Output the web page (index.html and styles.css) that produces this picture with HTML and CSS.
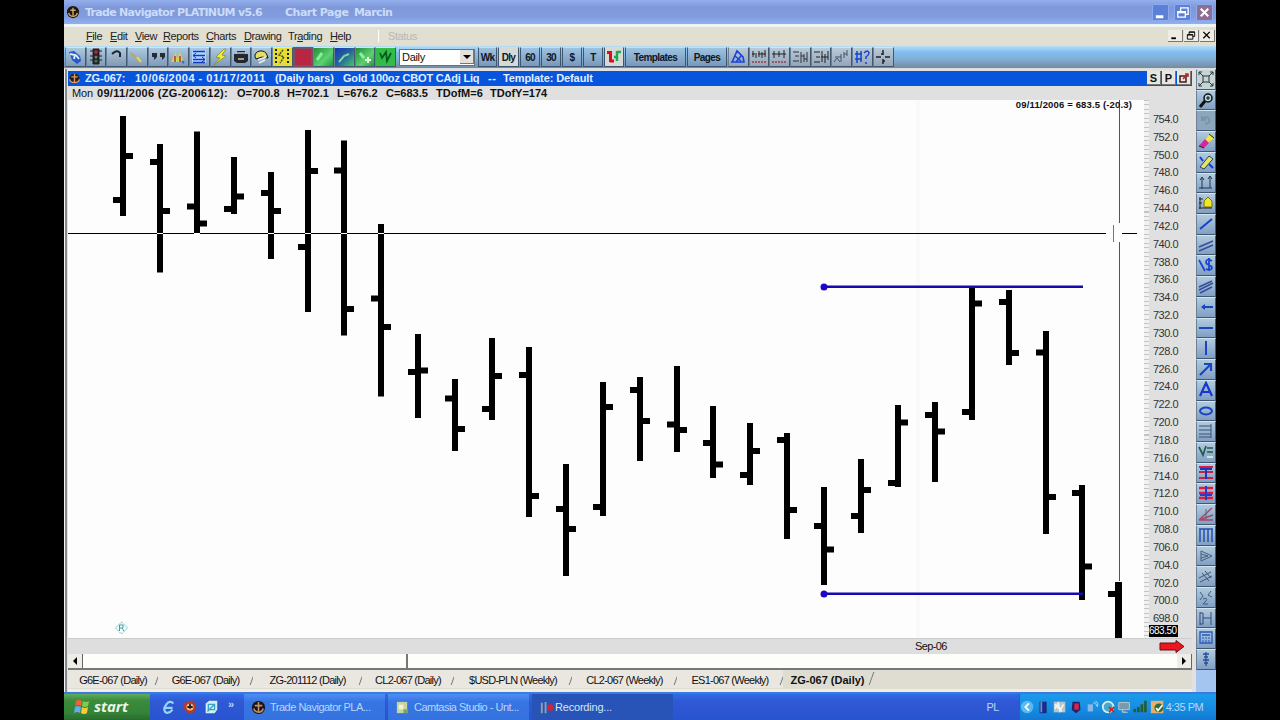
FILE: index.html
```html
<!DOCTYPE html>
<html lang="en">
<head>
    <meta charset="UTF-8">
    <title>Trade Navigator PLATINUM</title>
    <link rel="stylesheet" href="styles.css">
</head>
<body>
    <div class="screen">
        <header class="titlebar">
            <svg class="anchor" viewBox="0 0 16 16"><circle cx="8" cy="8" r="7" fill="#1b1713"/><path d="M8 3v9M5 6h6M3 9q1 4 5 4t5-4" stroke="#d5a66c" stroke-width="1.6" fill="none"/></svg>
            <span class="app-name">Trade Navigator PLATINUM v5.6</span>
            <span class="app-page">Chart Page</span>
            <span class="app-user">Marcin</span>
            <div class="window-buttons">
                <svg viewBox="0 0 16 16"><path d="M3 11h8v3H3z" fill="#fff"/></svg>
                <svg viewBox="0 0 16 16"><path d="M6 7V3h8v7h-3M3 7h8v6H3zM3 8h8" stroke="#fff" stroke-width="1.4" fill="none"/></svg>
                <svg class="close" viewBox="0 0 16 16"><path d="M4 4l8 8M12 4l-8 8" stroke="#fff" stroke-width="2.2"/></svg>
            </div>
        </header>

        <nav class="menubar">
            <span style="width:24px"><u>F</u>ile</span>
            <span style="width:25px"><u>E</u>dit</span>
            <span style="width:28px"><u>V</u>iew</span>
            <span style="width:43px"><u>R</u>eports</span>
            <span style="width:38px"><u>C</u>harts</span>
            <span style="width:44px"><u>D</u>rawing</span>
            <span style="width:42px">Tr<u>a</u>ding</span>
            <span style="width:48px"><u>H</u>elp</span>
            <span class="ghost">Status</span>
            <div class="mdi-buttons">
                <svg viewBox="0 0 12 12"><path d="M2 9h5" stroke="#000" stroke-width="2"/></svg>
                <svg viewBox="0 0 12 12"><path d="M4 5V2h6v5H8M2 5h6v5H2zM2 5.500h6M4 2.500h6" stroke="#000" fill="none"/></svg>
                <svg viewBox="0 0 12 12"><path d="M2 2l7 7M9 2l-7 7" stroke="#000" stroke-width="1.400"/></svg>
            </div>
        </nav>

        <div class="toolbar">
            <div class="tools">
                <i><svg viewBox="0 0 18 18"><path d="M3 4l5-1 6 5 1 5-4 3-5-4z" fill="#2956c9"/><path d="M4 6l5 1-1 4M10 7l3 4" stroke="#d5ecff" stroke-width="2" fill="none"/></svg></i>
                <i><svg viewBox="0 0 18 18"><path d="M6 1h6v15H6zM3 3h12M3 8h12M3 12h12" stroke="#222" fill="#222"/><circle cx="9" cy="4" r="2" fill="#b02030"/><circle cx="9" cy="9" r="1.500" fill="#777"/><circle cx="9" cy="13" r="1.500" fill="#427860"/></svg></i>
                <i><svg viewBox="0 0 18 18"><path d="M5 6q5-5 8-1v4" stroke="#222" stroke-width="2" fill="none"/><path d="M2 13h11" stroke="#99a6a8" stroke-width="2"/></svg></i>
                <i><svg viewBox="0 0 18 18"><path d="M3 4l10 8-2 3-9-9z" fill="#b0ab72"/><path d="M9 9l4 5" stroke="#e8d95a" stroke-width="2"/></svg></i>
                <i><svg viewBox="0 0 18 18"><path d="M3 5h5v4l-3 3V9H3zM11 5h5v4l-3 3V9h-2z" fill="#252c35"/></svg></i>
                <i><svg viewBox="0 0 18 18"><path d="M2 14l5-11 1 8 3-7 4 10z" fill="#d6cf5a"/><path d="M6 14V8M11 14V8" stroke="#b95e35" stroke-width="2"/><path d="M13 13l2 2" stroke="#376bb5" stroke-width="2"/></svg></i>
                <i><svg viewBox="0 0 18 18"><path d="M2 2h14v13H2z" fill="#abd4ff"/><path d="M3 3.500h12M3 7.500h12M3 11.500h12M3 14.500h12" stroke="#1438bf" stroke-width="1.500"/><path d="M6 5L3 7.500 6 10M12 9l3 2.500-3 2.500" stroke="#1438bf" fill="none"/></svg></i>
                <i><svg viewBox="0 0 18 18"><path d="M13 1L5 9l4 1-6 7 12-9-4-1 4-6z" fill="#f3ed2b" stroke="#7b7e34" stroke-width=".7"/></svg></i>
                <i><svg viewBox="0 0 18 18"><path d="M5 3h8v3h3v7l-3 2H5l-3-2V6h3z" fill="#24272b"/><path d="M5 5h8M6 11h6" stroke="#bdc7cc" stroke-width="1.500"/></svg></i>
                <i><svg viewBox="0 0 18 18"><path d="M3 9a6 5 0 0 1 12-2l1 3-6-1-6 2z" fill="#e4df66" stroke="#111"/><path d="M6 12l8-3M7 15l6-3" stroke="#eee" stroke-width="1.500"/></svg></i>
                <i class="film"><svg viewBox="0 0 18 18"><path d="M3 1v16M15 1v16" stroke="#222" stroke-width="2" stroke-dasharray="2 2"/><path d="M10 2l-4 5 5 2-4 6" stroke="#4c4c1c" stroke-width="1.500" stroke-dasharray="2 1" fill="none"/></svg></i>
                <i class="red"></i>
                <i class="green"><svg viewBox="0 0 18 18"><path d="M3 12l5-7" stroke="#8df09b" stroke-width="3"/></svg></i>
                <i class="bluegreen"><svg viewBox="0 0 18 18"><path d="M4 14l5-6 5-2" stroke="#6fe09b" stroke-width="2" fill="none"/></svg></i>
                <i class="green"><svg viewBox="0 0 18 18"><path d="M4 5l4 5" stroke="#8df09b" stroke-width="3"/><path d="M12 9v6M9 12h6" stroke="#e8fbdc" stroke-width="2"/></svg></i>
                <i class="green deep"><svg viewBox="0 0 18 18"><path d="M4 5l2 5 4-6 1 9 4-8" stroke="#07571c" stroke-width="1.700" fill="none"/></svg></i>
            </div>
            <div class="combo"><span>Daily</span><b></b></div>
            <div class="periods">
                <button style="width:19px">Wk</button>
                <button class="on" style="width:21px">Dly</button>
                <button style="width:20px">60</button>
                <button style="width:20px">30</button>
                <button style="width:20px">$</button>
                <button style="width:20px">T</button>
                <button class="candles" style="width:20px"><svg viewBox="0 0 18 18"><path d="M2 4.500h4M5.500 3v11M5 13h4" stroke="#d90f1c" stroke-width="3" fill="none"/><path d="M9 9h3M12 3v10M12 4h4" stroke="#1dab48" stroke-width="2.400" fill="none"/></svg></button>
                <button style="width:61px">Templates</button>
                <button style="width:40px">Pages</button>
            </div>
            <div class="tools studies">
                <i><svg viewBox="0 0 18 18"><path d="M4 12l4-9 6 6 1 5H3zM6 8l6 5M7 14l5-6" stroke="#1745dc" stroke-width="1.600" fill="none"/></svg></i>
                <i><svg viewBox="0 0 18 18"><path d="M3 3v6M6 5v5M9 3v6M12 4v6M15 2v7M2 6h3M8 6h8" stroke="#222"/><path d="M2 14h14" stroke="#9b5964" stroke-width="2" stroke-dasharray="2 1"/></svg></i>
                <i><svg viewBox="0 0 18 18"><path d="M4 3v7M9 3v6M14 2v8M2 6h14" stroke="#222"/><path d="M2 14h14" stroke="#9b5964" stroke-width="2" stroke-dasharray="2 1"/></svg></i>
                <i><svg viewBox="0 0 18 18"><path d="M2 4h6M4 8h4M2 13h6M10 4v11M13 6v8M16 4v10M10 8h3M13 11h3" stroke="#333"/></svg></i>
                <i><svg viewBox="0 0 18 18"><path d="M2 4h6M4 9h4M2 14h6M10 3v11M13 6v9M16 3v9M9 9h7" stroke="#222"/></svg></i>
                <i><svg viewBox="0 0 18 18"><path d="M2 14l3-4 3 4M9 6v8M12 4v6M15 2v6M3 9h6M12 6h3" stroke="#4b536b" fill="none"/></svg></i>
                <i><svg viewBox="0 0 18 18"><path d="M4 3v12M8 3v11M2 6h7M2 11h7M11 5q4-4 5 0 0 2-3 4v2M13 14v2" stroke="#1744d2" stroke-width="1.500" fill="none"/></svg></i>
                <i><svg viewBox="0 0 18 18"><path d="M9 2v5M9 11v5M2 9h5M11 9h5M7 6h2M9 13h2" stroke="#222" stroke-width="1.500"/></svg></i>
            </div>
        </div>

        <main class="workspace">
            <section class="document">
                <div class="doc-title">
                    <svg class="anchor" viewBox="0 0 16 16"><circle cx="8" cy="8" r="6" fill="#241c20"/><path d="M8 2v11M4 6h8M2 9q1 4 6 4t6-4" stroke="#d99c5c" stroke-width="1.700" fill="none"/></svg>
                    <span class="tight" style="width:50px">ZG-067:</span>
                    <span style="width:140px">10/06/2004 - 01/17/2011</span>
                    <span class="tight" style="width:68px">(Daily bars)</span>
                    <span class="tighter" style="width:145px">Gold 100oz CBOT CAdj Liq</span>
                    <span style="width:15px">--</span>
                    <span class="tight">Template: Default</span>
                    <div class="doc-buttons">
                        <b>S</b><b>P</b>
                        <b><svg viewBox="0 0 12 12"><path d="M2 4h6v6H2z" stroke="#421a20" stroke-width="1.500" fill="none"/><path d="M5 7l5-5M7 2h3v3" stroke="#b32735" stroke-width="1.500" fill="none"/></svg></b>
                    </div>
                </div>
                <div class="bar-info">
                    <span class="day" style="width:25px">Mon</span>
                    <span class="date" style="width:140px">09/11/2006 (ZG-200612):</span>
                    <span style="width:50px">O=700.8</span>
                    <span style="width:50px">H=702.1</span>
                    <span style="width:49px">L=676.2</span>
                    <span style="width:50px">C=683.5</span>
                    <span style="width:54px">TDofM=6</span>
                    <span>TDofY=174</span>
                </div>
                <div class="chart-row">
                    <div class="plot">
                        <svg width="1076" height="538" viewBox="68 100 1076 538">
                            <path d="M918 100V638" stroke="#f9f9f9" stroke-width="4"/>
                            <path id="bars" stroke="#000" stroke-width="6" fill="none"/>
                            <path d="M1118.500 582V638" stroke="#000" stroke-width="7"/>
                            <path d="M824 286.700H1083M824 593.700H1083" stroke="#1609ad" stroke-width="2.600"/>
                            <circle cx="824" cy="287" r="3.500" fill="#1b07c7"/>
                            <circle cx="824" cy="594" r="3.500" fill="#1b07c7"/>
                            <path d="M68 233.500H1106M1122 233.500H1137" stroke="#000"/>
                            <path id="crossings" stroke="#fff"/>
                            <path d="M1119.500 100V223M1119.500 242V581" stroke="#555"/>
                            <path d="M1113.500 225V242" stroke="#777"/>
                            <path d="M121.500 622l6 6-6 6-6-6z" fill="#f2ffff" stroke="#5db9b9" stroke-dasharray="2 1"/>
                            <path d="M119.500 631v-6h3.500v3h-3M122 628l2 3" stroke="#4b9e9e" fill="none"/>
                        </svg>
                        <div class="readout">09/11/2006 = 683.5 (-20.3)</div>
                    </div>
                    <div class="price-axis" id="axis"></div>
                </div>
                <div class="time-axis">
                    <span>Sep-06</span>
                    <svg viewBox="0 0 26 14"><path d="M1 3h16V0.500l8 6-8 6V10H1z" fill="#ed1620" stroke="#641018"/></svg>
                </div>
                <div class="scrollbar">
                    <b class="left"></b><div class="thumb"></div><b class="right"></b>
                </div>
                <div class="tabs">
                    <span style="width:90px">G6E-067 (Daily)</span>
                    <span style="width:95px">G6E-067 (Daily)</span>
                    <span style="width:109px">ZG-201112 (Daily)</span>
                    <span style="width:92px">CL2-067 (Daily)</span>
                    <span style="width:118px">$USD-PLN (Weekly)</span>
                    <span style="width:105px">CL2-067 (Weekly)</span>
                    <span style="width:106px">ES1-067 (Weekly)</span>
                    <span class="active" style="width:89px">ZG-067 (Daily)</span>
                </div>
            </section>

            <aside class="drawing-tools">
                <i class="pale"><svg viewBox="0 0 18 18"><path d="M6 6h6v6H6zM2 5V2h3M13 2h3v3M16 13v3h-3M5 16H2v-3M2 2l4 4M16 2l-4 4M2 16l4-4M16 16l-4-4" stroke="#333" fill="none"/></svg></i>
                <i><svg viewBox="0 0 18 18"><circle cx="11" cy="7" r="4" fill="#b9d3e4" stroke="#111" stroke-width="1.500"/><path d="M8 10l-5 6" stroke="#111" stroke-width="3"/><path d="M9 7h4M11 5v4" stroke="#111"/></svg></i>
                <i class="off"><svg viewBox="0 0 18 18"><path d="M6 8q4-4 6 0t-4 5M5 5v4h4" stroke="#7893aa" stroke-width="2" fill="none"/></svg></i>
                <i><svg viewBox="0 0 18 18"><path d="M8 8l5-6 4 4-6 5z" fill="#f1e83f"/><path d="M8 7l4 4-5 5-5-2z" fill="#d326a2"/><path d="M12 2l5 4M2 14l5 2" stroke="#222"/></svg></i>
                <i><svg viewBox="0 0 18 18"><path d="M3 14l9-11 4 3-9 10z" fill="#e3e56b" stroke="#24435f"/><path d="M3 4l3 4M12 11l4 4" stroke="#183bcf" stroke-width="2"/></svg></i>
                <i><svg viewBox="0 0 18 18"><path d="M5 4v11M13 3v11M2 14h13M3 6l2-3 2 3M11 5l2-3 2 3" stroke="#24394b" fill="none"/></svg></i>
                <i><svg viewBox="0 0 18 18"><path d="M7 13V7l4-4 4 4v6z" fill="#eee62e" stroke="#777300"/><path d="M3 3v12M2 5h4M2 9h3M2 14h13" stroke="#222"/></svg></i>
                <i><svg viewBox="0 0 18 18"><path d="M3 14L15 4" stroke="#1542ca" stroke-width="2"/></svg></i>
                <i><svg viewBox="0 0 18 18"><path d="M2 11l14-6M2 15l14-6" stroke="#3a4d9c" stroke-width="1.500"/></svg></i>
                <i><svg viewBox="0 0 18 18"><path d="M2 4l6 11M15 5q-6-3-6 1 0 2 3 3t3 3q-1 3-6 1M12 2v13" stroke="#1744cf" stroke-width="1.700" fill="none"/></svg></i>
                <i><svg viewBox="0 0 18 18"><path d="M2 10l13-6M2 13l14-7M3 16l12-6" stroke="#334d9c" stroke-width="1.400"/></svg></i>
                <i><svg viewBox="0 0 18 18"><path d="M5 9h11" stroke="#1944c2" stroke-width="2"/><path d="M8 6L4 9l4 3z" fill="#1944c2"/></svg></i>
                <i><svg viewBox="0 0 18 18"><path d="M2 9h14" stroke="#1944c2" stroke-width="2"/></svg></i>
                <i><svg viewBox="0 0 18 18"><path d="M9 2v14" stroke="#1944c2" stroke-width="2"/></svg></i>
                <i><svg viewBox="0 0 18 18"><path d="M3 15L14 4M7 4h7v7" stroke="#1944c2" stroke-width="2.200" fill="none"/></svg></i>
                <i><svg viewBox="0 0 18 18"><path d="M3 15L9 2l6 13M5 11h8" stroke="#1635d2" stroke-width="2.200" fill="none"/></svg></i>
                <i><svg viewBox="0 0 18 18"><ellipse cx="9" cy="9" rx="6" ry="3.500" stroke="#1944c2" stroke-width="2" fill="none"/></svg></i>
                <i><svg viewBox="0 0 18 18"><path d="M2 4h12M2 8h12M2 12h12M2 15h12M14 2v14" stroke="#3b526f"/></svg></i>
                <i><svg viewBox="0 0 18 18"><path d="M2 4l4 8 3-9M10 5h6M10 9h6" stroke="#22594e" stroke-width="1.700" fill="none"/><path d="M10 14h6" stroke="#cfe7cd" stroke-width="2"/></svg></i>
                <i><svg viewBox="0 0 18 18"><path d="M2 3h14M2 8h14M2 14h14" stroke="#cc1f47" stroke-width="2"/><path d="M3 5h12M9 4v11" stroke="#1f35b9" stroke-width="2"/></svg></i>
                <i><svg viewBox="0 0 18 18"><path d="M2 4h14M2 9h14M2 14h14" stroke="#e21a3d" stroke-width="2.500"/><path d="M9 2v14M3 11h12" stroke="#263bcc" stroke-width="2"/></svg></i>
                <i><svg viewBox="0 0 18 18"><path d="M2 15L15 3M2 15l14-5M2 15h14" stroke="#a64a67" stroke-width="1.500"/><path d="M9 4v11" stroke="#586b86"/></svg></i>
                <i><svg viewBox="0 0 18 18"><path d="M3 3v13M7 3v13M11 3v13M15 3v13M2 3h14" stroke="#2450ad" stroke-width="1.500"/></svg></i>
                <i><svg viewBox="0 0 18 18"><path d="M4 4l11 5-11 5zM4 7l7 2-7 2" stroke="#48617a" fill="none"/></svg></i>
                <i><svg viewBox="0 0 18 18"><path d="M2 11l12-6M3 15l12-6M5 6l7 8M8 4l6 7" stroke="#425570"/></svg></i>
                <i><svg viewBox="0 0 18 18"><path d="M3 4l3 4-3 4M14 3l-3 4 4 2M6 11q5-2 3 2l-3 3h5" stroke="#3d5c80" fill="none"/></svg></i>
                <i><svg viewBox="0 0 18 18"><path d="M3 3v13M14 3v13M3 4h3M3 15h3M6 4v11M6 9h8" stroke="#304c79" fill="none"/></svg></i>
                <i><svg viewBox="0 0 18 18"><path d="M3 3h12v11H3zM5 6h8" stroke="#2858bd" stroke-width="1.300" fill="none"/><path d="M5 9h8M5 12h8" stroke="#2858bd" stroke-dasharray="2 1"/></svg></i>
                <i><svg viewBox="0 0 18 18"><path d="M9 2v14M6 4h6M7 7h4M6 10h6M7 13h4" stroke="#254f9a" stroke-width="1.300"/></svg></i>
            </aside>
        </main>

        <footer class="taskbar">
            <div class="start">
                <svg viewBox="0 0 18 18"><path d="M3 3q3-2 6 0L8 8Q5 6 2 8z" fill="#f26131"/><path d="M10 3q3 2 6 0l-1 5q-3 2-6 0z" fill="#86c84d"/><path d="M2 9q3-2 6 0l-1 6q-3-2-6 0z" fill="#68a9ef"/><path d="M9 9q3 2 6 0l-1 6q-3 2-6 0z" fill="#f5cb39"/></svg>
                <span>start</span>
            </div>
            <div class="quick">
                <svg viewBox="0 0 18 18"><path d="M14 5Q10 1 6 6t-1 9q4 2 8-3M5 10h8" stroke="#93d7f5" stroke-width="2.500" fill="none"/></svg>
                <svg viewBox="0 0 18 18"><circle cx="9" cy="9" r="7" fill="#b63a29"/><circle cx="9" cy="9" r="4" fill="#f0c07a"/><path d="M9 5v6M6 9h6" stroke="#2a1c2a" stroke-width="2"/></svg>
                <svg viewBox="0 0 18 18"><path d="M3 5l4-3h9v10l-3 4H3z" fill="#d5eef6"/><path d="M6 6h7v6H6zM5 14l8-8" stroke="#39a3c5" stroke-width="1.500" fill="none"/></svg>
                <b>»</b>
            </div>
            <div class="task">
                <svg viewBox="0 0 16 16"><circle cx="8" cy="8" r="7" fill="#18151a"/><path d="M8 2v11M4 6h8M3 9q1 4 5 4t5-4" stroke="#c79263" stroke-width="1.700" fill="none"/></svg>
                <span>Trade Navigator PLA...</span>
            </div>
            <div class="task second">
                <svg viewBox="0 0 16 16"><path d="M2 2h11v12H2z" fill="#c8d3a1"/><path d="M4 5h5v5H4z" fill="#f3f4cf"/><path d="M9 10h5v4H9z" fill="#78a55d"/></svg>
                <span>Camtasia Studio - Unt...</span>
            </div>
            <div class="task pressed">
                <svg viewBox="0 0 16 16"><path d="M3 3v11M7 2v12" stroke="#8e9daf" stroke-width="2"/><circle cx="12" cy="8" r="3.500" fill="#d62432"/></svg>
                <span>Recording...</span>
            </div>
            <span class="lang">PL</span>
            <div class="tray">
                <svg viewBox="0 0 16 16"><circle cx="8" cy="8" r="7" fill="#58b9f5"/><path d="M10 4L6 8l4 4" stroke="#fff" stroke-width="2" fill="none"/></svg>
                <svg viewBox="0 0 16 16"><path d="M4 2h8v13H4z" fill="#172d87"/><path d="M6 2v12" stroke="#6691d8" stroke-width="2"/></svg>
                <svg viewBox="0 0 16 16"><path d="M2 2h13v12H2z" fill="#b8c4c9"/><path d="M3 10l4-6 2 8 4-7M3 5l8 8" stroke="#edf3ee" stroke-width="2" fill="none"/></svg>
                <svg viewBox="0 0 16 16"><path d="M4 2h8l1 9-5 4-5-4z" fill="#23216e"/><path d="M6 4h5v7H6z" fill="#d82442"/></svg>
                <svg viewBox="0 0 16 16"><path d="M3 5h6v8H3z" fill="#86b9eb"/><path d="M9 4q3-3 4 3M12 1q4 3 2 7" stroke="#b9deff" fill="none"/></svg>
                <svg viewBox="0 0 16 16"><circle cx="8" cy="8" r="6" fill="#4ba8c9" stroke="#d9f0ee" stroke-width="2"/><path d="M9 8l6 6M15 8l-6 6" stroke="#d02b20" stroke-width="2"/></svg>
                <svg viewBox="0 0 16 16"><path d="M2 3h12v8H2zM6 11v3h6" fill="#7a9aaa" stroke="#c5cac7"/></svg>
                <svg viewBox="0 0 16 16"><path d="M2 14v-4M6 14V8M10 14V5M14 14V1" stroke="#235e2d" stroke-width="3"/></svg>
                <svg viewBox="0 0 16 16"><path d="M1 1h14v14H1z" fill="#e4b06a"/><circle cx="10" cy="9" r="5" fill="#2c6e3a"/><path d="M7 9l2 3 5-6" stroke="#fff" stroke-width="2" fill="none"/></svg>
                <span>4:35 PM</span>
            </div>
        </footer>
    </div>

    <script>
        // high, low, open, close as heights on the plot
        const days = [
            [116, 216, 200, 156], [144, 272.5, 162, 211], [131.5, 234, 206.5, 223.5],
            [157, 214, 209, 196.5], [172, 259, 193, 211], [130, 312, 247, 171],
            [140.5, 335.5, 170.5, 309], [224, 396.5, 298.5, 327], [334, 418, 372, 370.5],
            [379, 451, 398.5, 429], [338, 420, 409, 376], [347, 517, 375, 496],
            [464, 576, 509, 529], [382, 516, 507, 407], [377, 461, 390, 421],
            [366, 452, 424.5, 430], [406, 478, 443, 464.5], [423, 485, 475, 451],
            [433, 539, 440, 510], [487, 585, 526, 549.5], [459, 533, 516, 490],
            [405, 487, 483, 422.5], [402, 482, 415, 431.5], [288, 420, 412, 303.5],
            [290, 365, 302, 353], [331, 534, 352.5, 497], [485, 600, 493, 566.5]
        ];
        let bars = 'M1108 594h8';
        let crossings = '';
        days.forEach(([high, low, open, close], i) => {
            const x = Math.round(123 + i * 36.9);
            bars += `M${x} ${high}V${low}M${x - 10} ${open}h10M${x} ${close}h10`;
            if (high < 233 && low > 233) crossings += `M${x - 3} 233.5h6`;
        });
        document.getElementById('bars').setAttribute('d', bars);
        document.getElementById('crossings').setAttribute('d', crossings);

        const axis = document.getElementById('axis');
        for (let price = 754; price >= 698; price -= 2) {
            const label = document.createElement('span');
            label.textContent = price.toFixed(1);
            axis.appendChild(label);
        }
        const last = document.createElement('b');
        last.textContent = '683.50';
        axis.appendChild(last);
    </script>
</body>
</html>
```
FILE: styles.css
```css
* {
    box-sizing: border-box;
}

body {
    margin: 0;
    background: #000;
    overflow: hidden;
    font-family: "Liberation Sans", Arial, sans-serif;
    font-size: 11px;
    color: #111;
    white-space: nowrap;
}

svg {
    display: block;
    flex: none;
}

.screen {
    width: 1152px;
    height: 720px;
    margin: 0 auto;
    display: flex;
    flex-direction: column;
    background: #e4e2dc;
}

/* title bar */
.titlebar {
    height: 24px;
    display: flex;
    align-items: center;
    padding-left: 2px;
    background: linear-gradient(#95b0ee, #7e98d9 30%, #829cdd 70%, #8fb2ef);
    color: #cbdcfa;
    font-family: "DejaVu Sans", sans-serif;
    font-size: 11px;
    font-weight: bold;
}

.anchor {
    width: 14px;
    height: 14px;
}

.app-name {
    width: 200px;
    margin-left: 5px;
    letter-spacing: -0.7px;
}

.app-page {
    width: 69px;
    letter-spacing: -0.5px;
}

.app-user {
    letter-spacing: -0.6px;
}

.window-buttons {
    margin-left: auto;
    display: flex;
    gap: 5px;
    padding-right: 3px;
}

.window-buttons svg {
    width: 17px;
    height: 17px;
    background: #5c80d5;
    border: 1px solid #8caaf0;
    border-radius: 2px;
}

.window-buttons .close {
    background: #8e6f92;
}

/* menu */
.menubar {
    height: 22px;
    display: flex;
    align-items: center;
    padding: 0 1px 1px 22px;
    border-top: 3px solid #f0f3f4;
    background: #e1ded2;
}

.menubar > span {
    color: #222;
    flex: none;
    letter-spacing: -0.4px;
}

.menubar .ghost {
    padding-left: 9px;
    border-left: 1px solid #fff;
    color: #b9b8b1;
}

.mdi-buttons {
    display: flex;
    margin-left: auto;
    gap: 1px;
}

.mdi-buttons svg {
    width: 15px;
    height: 12px;
    border-right: 1px solid #777;
    border-bottom: 1px solid #777;
    background: #eeece3;
}

/* toolbar */
.toolbar {
    height: 22px;
    display: flex;
    align-items: center;
    padding-left: 1px;
    background: linear-gradient(#b6dcf4, #80bdf0 30%, #82aed6 60%, #748a9e);
}

.tools {
    display: flex;
}

.tools i,
.drawing-tools i {
    width: 20.7px;
    height: 20px;
    border: 1px solid #43586f;
    border-top-color: #d2e6f2;
    border-left-color: #6a8098;
    background: linear-gradient(#abc9df, #809ab9);
}

.tools svg {
    width: 18px;
    height: 18px;
}

.tools .film {
    background: #e5dd31;
}

.tools .red {
    background: #b82643;
    border: 2px solid #765067;
}

.tools .green {
    background: linear-gradient(135deg, #238c3c, #5cd270 60%, #249545);
}

.tools .bluegreen {
    background: linear-gradient(135deg, #123dad, #2a60a0 50%, #42cc66);
}

.tools .deep {
    background: #31bc45;
}

.combo {
    width: 76px;
    height: 17px;
    margin-left: 3px;
    padding-left: 2px;
    display: flex;
    align-items: center;
    background: #fff;
    border: 1px solid #69757e;
    letter-spacing: -0.3px;
}

.combo b {
    width: 14px;
    height: 14px;
    margin-left: auto;
    padding: 5px 3px;
    background: #e3e1da;
    border-right: 1px solid #777;
    border-bottom: 1px solid #777;
}

.combo b::after,
.scrollbar b::after {
    content: "";
    display: block;
    width: 0;
    border: 4px solid transparent;
    border-top-color: #000;
    border-bottom: 0;
}

.periods {
    display: flex;
    gap: 1px;
    margin-left: 3px;
}

.periods button {
    height: 20px;
    padding: 0;
    border: 1px solid #3e566f;
    border-top-color: #c6dfef;
    background: linear-gradient(#9dc3e0, #7898bc);
    font: bold 10px "Liberation Sans", Arial, sans-serif;
    letter-spacing: -0.7px;
    color: #10151f;
}

.periods button:nth-last-child(-n+2) {
    letter-spacing: -0.6px;
}

.periods .on,
.periods .candles {
    background: #d5d9d8;
}

.studies {
    margin-left: 1px;
}

.studies i {
    background: linear-gradient(#b8cbd9, #95a5b9);
}

/* chart window */
.workspace {
    height: 624px;
    display: flex;
    border-top: 1px solid #d8dde0;
}

.document {
    width: 1132px;
    padding: 2px 0 0 3px;
    border-left: 1px solid #f5f5f5;
    background: #e2e1df;
    box-shadow: inset 2px 0 #85898c;
}

.doc-title {
    width: 1124px;
    height: 15px;
    padding-bottom: 1px;
    display: flex;
    align-items: center;
    background: #0855dd;
    color: #e3efff;
    font-weight: bold;
    letter-spacing: 0.5px;
}

.doc-title .anchor {
    width: 13px;
    height: 13px;
    margin-right: 4px;
}

.doc-title span,
.bar-info span {
    flex: none;
}

.doc-title .tight {
    letter-spacing: -0.1px;
}

.doc-title .tighter {
    letter-spacing: -0.2px;
}

.doc-buttons {
    display: flex;
    margin-left: auto;
    gap: 1px;
    padding-right: 1px;
    letter-spacing: 0;
    color: #111;
}

.doc-buttons b {
    width: 14px;
    height: 14px;
    display: flex;
    align-items: center;
    justify-content: center;
    background: #e9e6dd;
    border-right: 1px solid #777;
    border-bottom: 1px solid #777;
}

.doc-buttons svg {
    width: 12px;
}

.bar-info {
    height: 14px;
    padding: 0 0 1px 4px;
    display: flex;
    align-items: center;
    background: #e0e0e0;
    font-weight: bold;
    letter-spacing: 0;
}

.bar-info .day {
    font-weight: normal;
    letter-spacing: -0.2px;
}

.bar-info .date {
    letter-spacing: 0.3px;
}

.chart-row {
    display: flex;
    height: 538px;
}

.plot {
    position: relative;
    width: 1076px;
    background: #fdfdfd;
}

.readout {
    position: absolute;
    top: -1px;
    right: 12px;
    font-size: 9.5px;
    font-weight: bold;
    letter-spacing: 0.15px;
}

.price-axis {
    width: 50px;
    padding: 10px 0 0 9px;
    background: repeating-linear-gradient(#c4c4c4 0 1px, #f2f2f2 1px 4.46px) 0 0 / 5px 100% no-repeat, #e0e0e0;
    color: #333;
    letter-spacing: -0.5px;
}

.price-axis span {
    display: block;
    height: 17.84px;
    line-height: 18px;
}

.price-axis b {
    display: block;
    width: 29px;
    height: 12px;
    margin: -2px 0 0 -4px;
    background: #000;
    color: #fff;
    font-size: 10px;
    font-weight: normal;
    line-height: 12px;
}

.time-axis {
    width: 1124px;
    height: 16px;
    padding-left: 847px;
    display: flex;
    align-items: center;
    background: #dedede;
    border-top: 1px solid #ccc;
}

.time-axis span {
    margin-top: -2px;
    letter-spacing: -0.6px;
}

.time-axis svg {
    width: 26px;
    height: 14px;
    margin-left: auto;
    margin-right: 7px;
}

.scrollbar {
    width: 1124px;
    height: 16px;
    display: flex;
    background: #fdfdfa;
    border-bottom: 2px solid #777;
}

.scrollbar b {
    width: 15px;
    height: 14px;
    padding: 5px 3px;
    background: #efede7;
    border-right: 1px solid #666;
}

.scrollbar .left::after {
    transform: rotate(90deg);
}

.scrollbar .right {
    margin-left: auto;
}

.scrollbar .right::after {
    transform: rotate(-90deg);
}

.thumb {
    width: 325px;
    border-right: 2px solid #777;
    background: #fdfdfa;
}

.tabs {
    width: 1124px;
    height: 23px;
    display: flex;
    background: #dfddd2;
    border-bottom: 4px solid #efeee6;
}

.tabs span {
    position: relative;
    height: 18px;
    line-height: 20px;
    text-align: center;
    background: #e9e7df;
    letter-spacing: -0.75px;
}

.tabs span::after {
    content: "";
    position: absolute;
    right: 0;
    top: 2px;
    height: 13px;
    border-right: 1px solid #777;
    transform: skewX(-20deg);
}

.tabs .active {
    font-weight: bold;
    background: #dfddd2;
    letter-spacing: 0;
}

.drawing-tools {
    width: 20px;
    background: #a3c5ef;
}

.drawing-tools i {
    display: block;
    width: 20px;
    height: 20.72px;
    background: linear-gradient(#b1cadd, #819fc4);
}

.drawing-tools svg {
    width: 18px;
    height: 18px;
}

.drawing-tools .pale {
    background: #c4d4d7;
}

.drawing-tools .off {
    background: #8ca6bb;
}

/* taskbar */
.taskbar {
    height: 28px;
    display: flex;
    align-items: center;
    border-top: 2px solid #3c7ae0;
    background: linear-gradient(#2f6ce5, #3158d5 30%, #2854d0);
    color: #b7d6fb;
    letter-spacing: -0.5px;
}

.start {
    width: 86px;
    height: 26px;
    display: flex;
    align-items: center;
    padding-left: 9px;
    gap: 3px;
    background: linear-gradient(#5fac5c, #3b8c3d 25%, #348237 75%, #286b2c);
    color: #e9f5e5;
    font: italic bold 15px "Open Sans", sans-serif;
    letter-spacing: -0.1px;
}

.start span {
    margin-top: -3px;
}

.start svg {
    width: 18px;
    height: 18px;
}

.quick {
    width: 94px;
    display: flex;
    align-items: center;
    gap: 5px;
    padding-left: 11px;
}

.quick svg {
    width: 16px;
    height: 16px;
}

.quick b {
    margin: -6px 0 0 4px;
}

.task {
    width: 141px;
    height: 26px;
    margin-right: 3px;
    padding-left: 7px;
    display: flex;
    align-items: center;
    gap: 4px;
    background: linear-gradient(#4e8ff3, #3775e5 30%, #3472df);
}

.task svg {
    width: 15px;
    height: 15px;
}

.task.pressed {
    background: #2854b7;
    color: #d5e4f6;
    letter-spacing: -0.2px;
}

.lang {
    margin-left: auto;
    margin-right: 20px;
}

.tray {
    width: 197px;
    height: 26px;
    padding: 0 15px 0 0;
    display: flex;
    align-items: center;
    gap: 2px;
    background: linear-gradient(#1d9bea, #168be0 60%, #1279d2);
    border-left: 1px solid #1167bc;
}

.tray svg {
    width: 14.2px;
    height: 16px;
}

.tray span {
    margin-left: auto;
}

.task.pressed span {
    margin-left: -3px;
}
```
